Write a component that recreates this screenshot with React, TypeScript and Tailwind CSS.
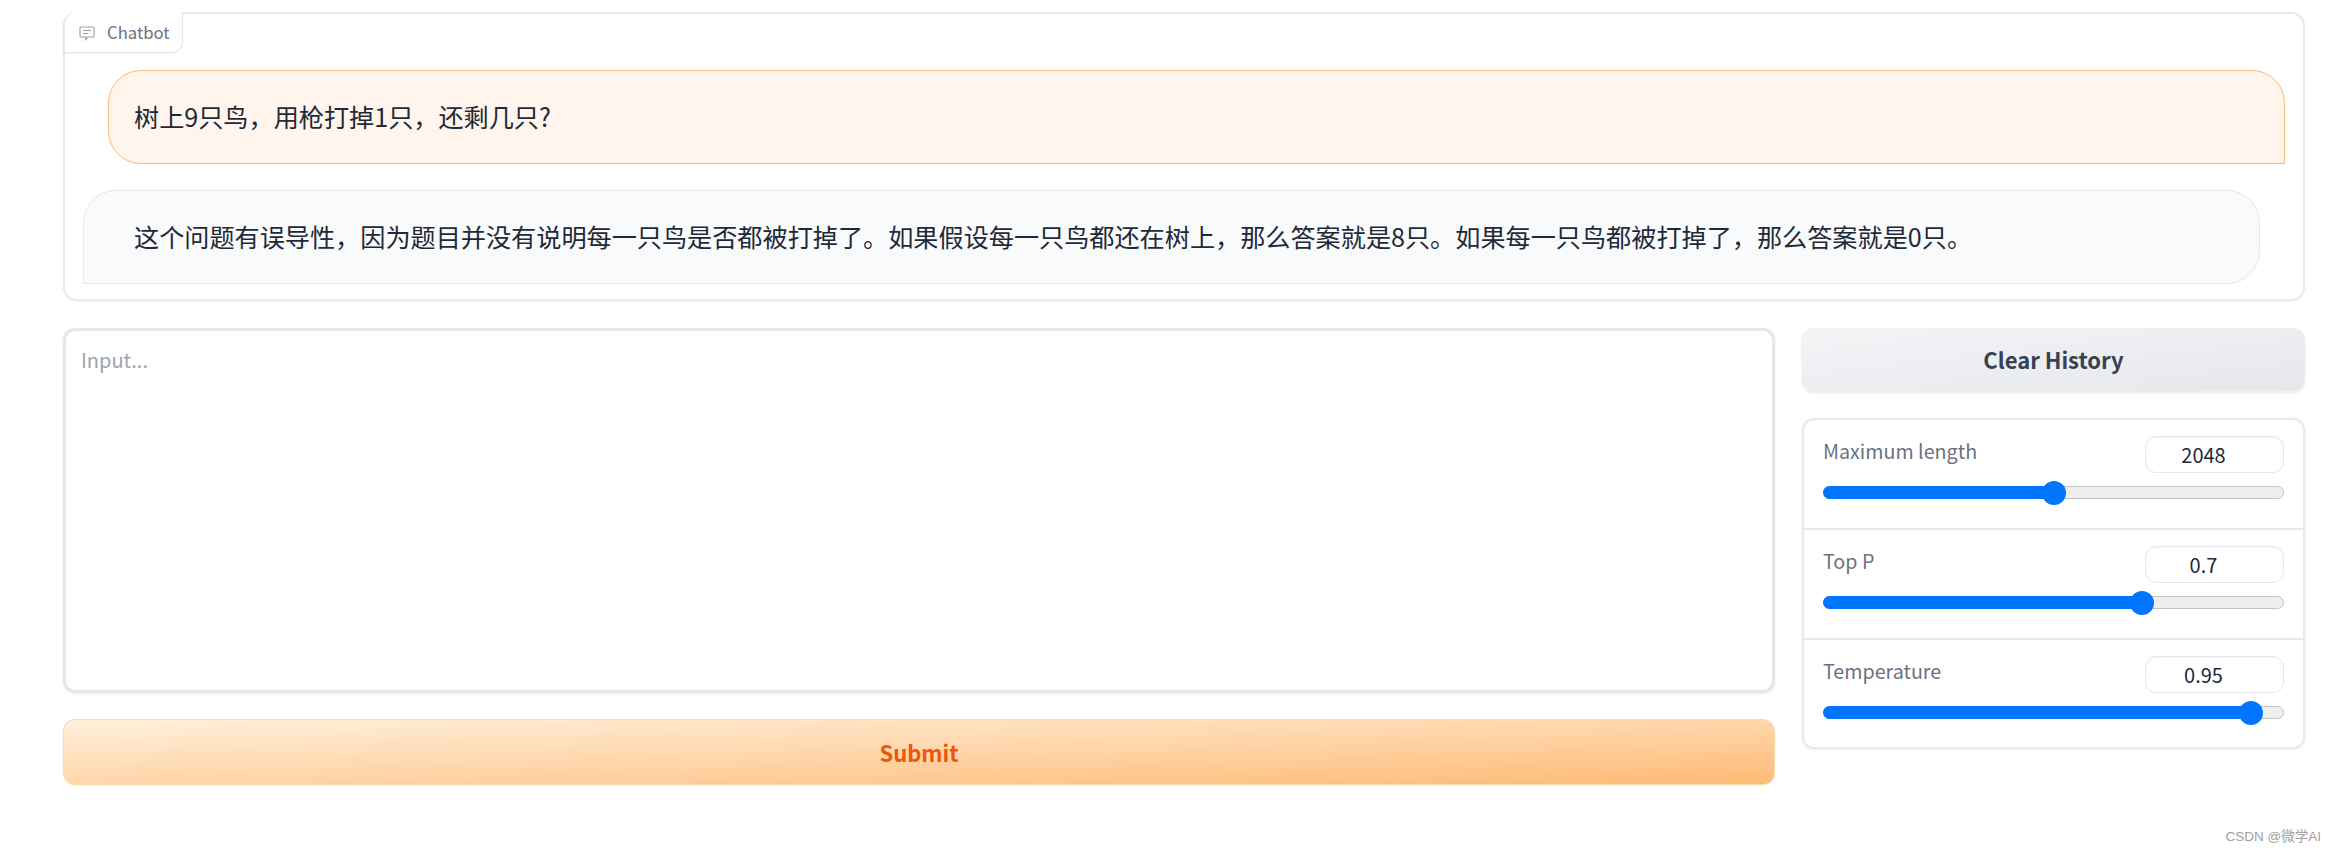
import React from 'react';

const FONT = "font-['Noto_Sans_CJK_SC','Noto_Sans',sans-serif]";

const sliders = [
  { label: 'Maximum length', value: '2048', pos: 230, height: 'h-[110px]' },
  { label: 'Top P', value: '0.7', pos: 318, height: 'h-[110px]' },
  { label: 'Temperature', value: '0.95', pos: 427, height: 'h-[107px]' },
];

const ChatIcon: React.FC = () => (
  <svg viewBox="0 0 16 16" className="w-4 h-4 text-[#9ca3af]" fill="none" stroke="currentColor" strokeWidth="1.2">
    <path d="M2 2h12a1 1 0 0 1 1 1v8a1 1 0 0 1-1 1H8.800l-2.300 2.500.3-2.500H2a1 1 0 0 1-1-1V3a1 1 0 0 1 1-1z" />
    <path d="M4 5.500h8M4 8.500h5" />
  </svg>
);

const SliderRow: React.FC<{ label: string; value: string; pos: number; height: string; last: boolean }> = ({ label, value, pos, height, last }) => (
  <div className={`${height} px-[19px] pt-4 ${last ? '' : 'border-b-2 border-[#e5e7eb]'}`}>
    <div className="flex justify-between items-start">
      <span className="text-[19.7px] leading-[30px] text-[#6b7280]">{label}</span>
      <div className="w-[139px] h-[37px] pr-[22px] rounded-[11px] border border-[#e5e7eb] shadow-[inset_0_1px_2px_rgba(0,0,0,0.04)] flex items-center justify-center text-[20px] text-[#1f2937]">
        {value}
      </div>
    </div>
    <div className="relative h-[13px] mt-[13px] rounded-full bg-[#efefef] border border-[#c4c4c4]">
      <div className="rounded-full bg-[#0075ff] absolute -left-px -top-px bottom-[-1px]" style={{ width: pos }} />
      <div className="absolute top-1/2 w-6 h-6 -translate-x-1/2 -translate-y-1/2 rounded-full bg-[#0075ff]" style={{ left: pos }} />
    </div>
  </div>
);

export default function App() {
  return (
    <div className={`relative min-h-screen bg-white pl-[63px] pr-[30px] pt-[12px] ${FONT}`}>
      {/* Chatbot */}
      <div className="relative h-[289px] rounded-[14px] border-2 border-[#e9e9ea] shadow-[0_1px_2px_rgba(0,0,0,0.05)] pt-[56px]">
        <div className="absolute -left-0.5 -top-0.5 h-[41px] w-[120px] flex items-center gap-3 pl-[14px] pt-[2px] rounded-br-[12px] rounded-tl-[14px] border-r border-b border-[#e5e7eb] border-l-2 shadow-[0_1px_2px_rgba(0,0,0,0.05)] text-[16.7px] text-[#6b7280] bg-white">
          <ChatIcon />
          <span>Chatbot</span>
        </div>
        <div className="ml-[43px] mr-[18px] h-[94px] flex items-center pl-[25px] rounded-t-[33px] rounded-bl-[33px] border border-[#fdba74] bg-[#fff5ec] text-[25.15px] text-[#1f2937]">
          树上9只鸟，用枪打掉1只，还剩几只?
        </div>
        <div className="ml-[18px] mr-[43px] mt-[26px] h-[94px] flex items-center pl-[50px] rounded-t-[33px] rounded-br-[33px] border border-[#e5e7eb] bg-[#f9fafb] text-[25.15px] text-[#1f2937]">
          这个问题有误导性，因为题目并没有说明每一只鸟是否都被打掉了。如果假设每一只鸟都还在树上，那么答案就是8只。如果每一只鸟都被打掉了，那么答案就是0只。
        </div>
      </div>

      <div className="flex gap-[27px] mt-[27px]">
        {/* Input column */}
        <div className="w-[1712px]">
          <div className="h-[365px] rounded-[12px] border-[3px] border-[#e5e7eb] shadow-[0_1px_3px_rgba(0,0,0,0.08)] px-[15px] pt-[15px] text-[20px] leading-[28px] text-[#9ca3af]">
            Input...
          </div>
          <button className="mt-[26px] block w-full h-[66px] rounded-[12px] border border-[#fcd9aa] bg-gradient-to-br from-[#fff0dc] to-[#fdba74] text-[22px] font-semibold text-[#ea580c] shadow-[0_1px_2px_rgba(0,0,0,0.05)]">
            Submit
          </button>
        </div>

        {/* Controls column */}
        <div className="flex-1">
          <button className="block w-full h-[64px] pb-[2px] rounded-[12px] border border-[#eeeff1] bg-gradient-to-br from-[#f3f4f6] to-[#e5e7eb] text-[22px] font-semibold text-[#374151] shadow-[0_1px_3px_rgba(0,0,0,0.1)]">
            Clear History
          </button>
          <div className="mt-[26px] rounded-[12px] border-2 border-[#e9e9ea] shadow-[0_1px_3px_rgba(0,0,0,0.08)] overflow-hidden">
            {sliders.map((s, i) => (
              <SliderRow key={s.label} label={s.label} value={s.value} pos={s.pos} height={s.height} last={i === sliders.length - 1} />
            ))}
          </div>
        </div>
      </div>

      <div className="absolute right-[14px] bottom-[6px] text-[13.5px] text-[#a0a0a0] font-['Liberation_Sans','Noto_Sans_CJK_SC',sans-serif]">CSDN @微学AI</div>
    </div>
  );
}
